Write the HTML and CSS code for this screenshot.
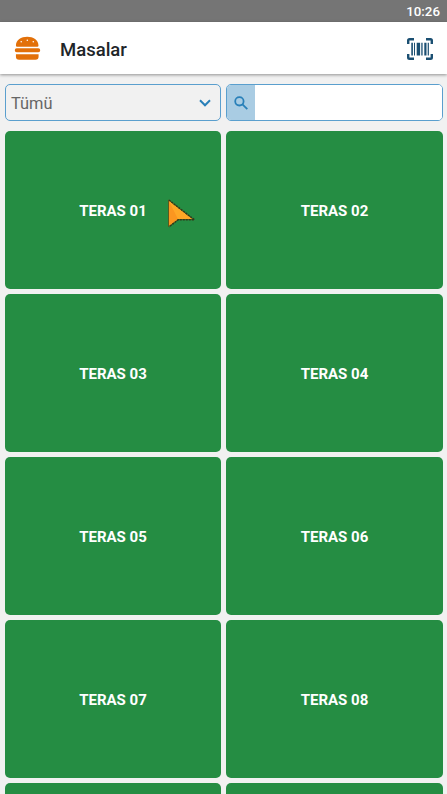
FILE: index.html
```html
<!DOCTYPE html>
<html lang="tr">
<head>
<meta charset="utf-8">
<title>Masalar</title>
<link rel="stylesheet" href="styles.css">
</head>
<body>
<div class="status">10:26</div>
<header class="header">
  <svg class="burger" width="27" height="24" viewBox="0 0 28 24" preserveAspectRatio="none">
    <path fill="#e27009" d="M2 9.500C2 4.200 7.500 .8 13.700.8S25.400 4.200 25.400 9.500q0 1.200-1.200 1.200H3.200q-1.200 0-1.200-1.200zM2.800 12.300h22.400a2 2 0 0 1 0 4H2.800a2 2 0 0 1 0-4zM2 18.200h23.500v2.200q0 3.300-3.300 3.300H5.300Q2 23.700 2 20.400z"/>
    <g fill="#fff"><circle cx="7.500" cy="5.800" r=".8"/><circle cx="13.800" cy="4.200" r=".8"/><circle cx="20" cy="5.800" r=".8"/></g>
  </svg>
  <h1 class="title">Masalar</h1>
  <svg class="scan" width="28" height="24" viewBox="0 0 28 24">
    <path fill="none" stroke="#1b4f72" stroke-width="2.400" d="M2.200 7V3.500q0-1.300 1.300-1.300H8M20 2.200h4.500q1.300 0 1.300 1.300V7M25.800 17v3.500q0 1.300-1.300 1.300H20M8 21.800H3.500q-1.300 0-1.300-1.300V17"/>
    <path fill="#1b4f72" d="M5.300 5.800h1.600v12.700H5.300zM8 5.800h1v12.700H8zM10.700 5.800h3.400v12.700h-3.400zM15.300 5.800h1.300v12.700h-1.300zM18.300 5.800h2.200v12.700h-2.200zM21.700 5.800h1.200v12.700h-1.200z"/>
  </svg>
</header>
<main class="grid">
  <div class="field select"><span>Tümü</span>
    <svg width="12" height="8" viewBox="0 0 12 8"><path fill="none" stroke="#2980b9" stroke-width="2" d="M1 1.300 6 6.300 11 1.300"/></svg>
  </div>
  <div class="field search">
    <span class="search-icon"><svg width="16" height="16" viewBox="0 0 16 16"><g fill="none" stroke="#2980b9" stroke-width="1.800"><circle cx="6.400" cy="6.300" r="4.200"/><path d="M9.500 9.400 14.300 14.200"/></g></svg></span>
    <input class="search-input" type="text" aria-label="Ara">
  </div>
  <div class="tile">TERAS 01</div>
  <div class="tile">TERAS 02</div>
  <div class="tile">TERAS 03</div>
  <div class="tile">TERAS 04</div>
  <div class="tile">TERAS 05</div>
  <div class="tile">TERAS 06</div>
  <div class="tile">TERAS 07</div>
  <div class="tile">TERAS 08</div>
  <div class="tile"></div>
  <div class="tile"></div>
</main>
<svg class="cursor" width="30" height="32" viewBox="0 0 30 32">
  <path fill="#ffa726" stroke="#5b5a1c" stroke-width="1" d="M1.500 2 26.500 21.500H11L1.500 28.500z"/>
  <path fill="#fb9620" d="M2 3 11 21.200 2 27.600z"/>
  <path fill="none" stroke="#303a1d" stroke-width="1.400" stroke-dasharray="2 1" d="M2 2 27.500 21.800H11.200L2 29"/>
</svg>
</body>
</html>
```
FILE: styles.css
```css
* { box-sizing: border-box; }
body {
  margin: 0;
  height: 794px;
  overflow: hidden;
  position: relative;
  background: #f1f1f1;
  font-family: Roboto, "Liberation Sans", sans-serif;
}
.status {
  height: 22px;
  padding-right: 7px;
  background: #757575;
  color: #fff;
  font-size: 13.3px;
  font-weight: 500;
  line-height: 24px;
  text-align: right;
}
.header {
  display: flex;
  align-items: center;
  height: 52px;
  padding: 0 13px;
  background: #fff;
  box-shadow: 0 1px 3px rgba(0, 0, 0, .4);
}
.burger { margin: 0 0 0 1px; }
.title {
  flex: 1;
  margin: 3px 0 0 19px;
  color: #212529;
  font-size: 18.5px;
  font-weight: 500;
  line-height: 24px;
}
.scan { margin-top: 1px; }
.grid {
  display: grid;
  grid-template-columns: 216px 217px;
  grid-template-rows: 42px;
  grid-auto-rows: 157.9px;
  gap: 5px;
  height: 720px;
  padding: 10px 4px 0 5px;
  overflow: hidden;
}
.field {
  display: flex;
  align-items: center;
  height: 37px;
  border: 1px solid #5a9fce;
  border-radius: 5px;
  overflow: hidden;
}
.select {
  justify-content: space-between;
  padding: 0 9px 0 5px;
  color: #666;
  font-size: 16.4px;
}
.select span { padding-top: 1px; }
.search { background: #fff; }
.search-icon {
  display: flex;
  align-items: center;
  justify-content: center;
  width: 28px;
  height: 35px;
  background: #a9cce3;
}
.search-input {
  flex: 1;
  min-width: 0;
  height: 35px;
  border: 0;
  outline: 0;
  background: #fff;
}
.tile {
  display: flex;
  align-items: center;
  justify-content: center;
  padding-top: 2px;
  border-radius: 5px;
  background: #258d43;
  color: #fff;
  font-size: 15px;
  font-weight: 700;
}
.cursor {
  position: absolute;
  left: 167px;
  top: 198px;
}
```
